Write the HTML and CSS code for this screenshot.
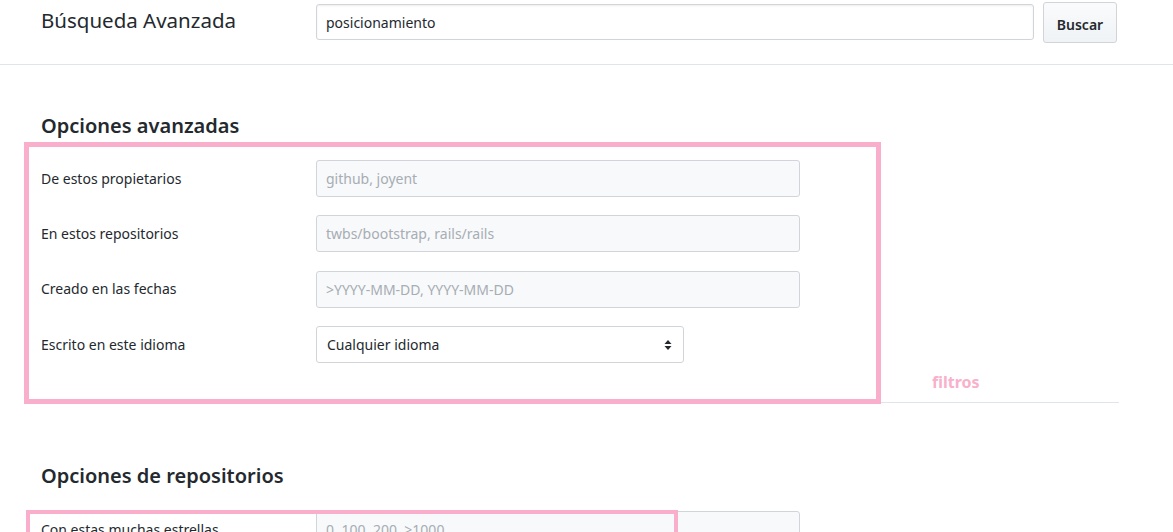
FILE: index.html
```html
<!DOCTYPE html>
<html lang="es">
<head>
<meta charset="utf-8">
<title>Búsqueda Avanzada</title>
<link rel="stylesheet" href="styles.css">
</head>
<body>
<header class="topbar">
  <h1 class="title">Búsqueda Avanzada</h1>
  <div class="search">
    <input class="search-input" type="text" value="posicionamiento">
    <button class="btn" type="button">Buscar</button>
  </div>
</header>
<main class="main">
  <section class="section">
    <h2 class="section-title">Opciones avanzadas</h2>
    <div class="row">
      <label class="label">De estos propietarios</label>
      <input class="field" type="text" placeholder="github, joyent">
    </div>
    <div class="row">
      <label class="label">En estos repositorios</label>
      <input class="field" type="text" placeholder="twbs/bootstrap, rails/rails">
    </div>
    <div class="row">
      <label class="label">Creado en las fechas</label>
      <input class="field" type="text" placeholder="&gt;YYYY-MM-DD, YYYY-MM-DD">
    </div>
    <div class="row">
      <label class="label">Escrito en este idioma</label>
      <div class="select">
        <span>Cualquier idioma</span>
        <svg class="caret" width="8" height="12" viewBox="0 0 8 12"><path d="M4 1 L7.5 5 H0.5 Z M4 11 L7.5 7 H0.5 Z" fill="#24292e"/></svg>
      </div>
    </div>
    <div class="divider"></div>
    <div class="mark mark-1"></div>
    <span class="note">filtros</span>
  </section>
  <section class="section section-2">
    <h2 class="section-title">Opciones de repositorios</h2>
    <div class="row">
      <label class="label">Con estas muchas estrellas</label>
      <input class="field" type="text" placeholder="0..100, 200, &gt;1000">
    </div>
    <div class="mark mark-2"></div>
  </section>
</main>
</body>
</html>
```
FILE: styles.css
```css
* { box-sizing: border-box; }
html, body { margin: 0; padding: 0; background: #fff; overflow: hidden; }
body {
  font-family: "Noto Sans", "Open Sans", "Liberation Sans", sans-serif;
  color: #24292e;
  font-size: 14px;
  width: 1173px;
  height: 532px;
}
.topbar {
  display: grid;
  grid-template-columns: 275px 1fr;
  align-items: start;
  height: 65px;
  padding: 4px 56px 0 41px;
  border-bottom: 1px solid #e1e4e8;
}
.title {
  margin: 0;
  font-size: 20.5px;
  font-weight: 400;
  line-height: 32px;
  color: #24292e;
}
.search {
  display: flex;
  align-items: flex-start;
  gap: 9px;
}
.search-input {
  flex: 1;
  height: 36px;
  border: 1px solid #d1d5da;
  border-radius: 3px;
  padding: 0 9px;
  font: inherit;
  font-size: 14px;
  color: #24292e;
  background: #fff;
  box-shadow: inset 0 1px 2px rgba(27,31,35,0.075);
}
.btn {
  height: 41px;
  width: 74px;
  margin-top: -2px;
  border: 1px solid #d1d5da;
  border-radius: 3px;
  background: linear-gradient(#fafbfc, #eff3f6);
  font: inherit;
  font-size: 14px;
  font-weight: 600;
  color: #24292e;
  padding: 3px 0 0;
}
.main { position: relative; padding: 0 54px 0 41px; }
.section { position: relative; }
.section-title {
  margin: 46px 0 19px;
  font-size: 20px;
  font-weight: 600;
  line-height: 30px;
  color: #24292e;
}
.row {
  display: grid;
  grid-template-columns: 275px auto;
  justify-content: start;
  align-items: center;
  margin-bottom: 18.4px;
}
.label { font-size: 14px; line-height: 20px; color: #24292e; }
.field {
  width: 484px;
  height: 37px;
  border: 1px solid #d1d5da;
  border-radius: 3px;
  background: #f8f9fa;
  padding: 0 9px;
  font: inherit;
  font-size: 14px;
  color: #24292e;
}
.field::placeholder { color: #a6adb4; }
.select {
  width: 368px;
  height: 37px;
  border: 1px solid #d1d5da;
  border-radius: 3px;
  background: #fff;
  padding: 0 9px 0 10px;
  display: flex;
  align-items: center;
  justify-content: space-between;
  font-size: 14px;
}
.caret { margin-right: 2px; }
.divider {
  height: 1px;
  background: #e1e4e8;
  margin-top: 39px;
}
.section-2 .section-title { margin-top: 58px; margin-bottom: 20px; }
.mark {
  position: absolute;
  border: 5px solid #f9aecb;
  pointer-events: none;
}
.mark-1 { left: -17px; top: 31px; width: 857px; height: 262px; }
.mark-2 { left: -15px; top: 49px; width: 652px; height: 40px; border-width: 4px; }
.note {
  position: absolute;
  left: 891px;
  top: 260px;
  font-size: 16px;
  font-weight: 700;
  color: #f8b0cb;
}
```
